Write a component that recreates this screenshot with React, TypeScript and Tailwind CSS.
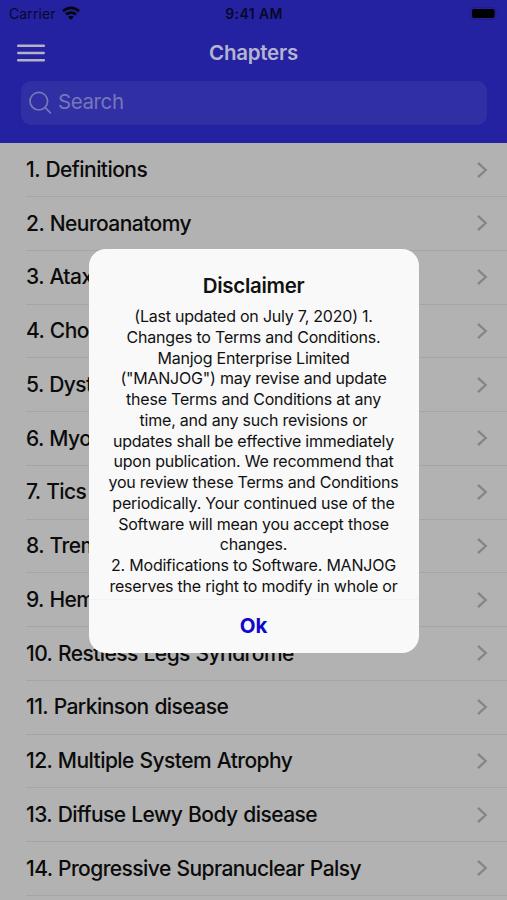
import React, { useState } from 'react'

const chapters = [
  'Definitions',
  'Neuroanatomy',
  'Ataxia',
  'Chorea',
  'Dystonia',
  'Myoclonus',
  'Tics',
  'Tremor',
  'Hemiballism',
  'Restless Legs Syndrome',
  'Parkinson disease',
  'Multiple System Atrophy',
  'Diffuse Lewy Body disease',
  'Progressive Supranuclear Palsy',
]

const disclaimerLines = [
  '(Last updated on July 7, 2020) 1.',
  'Changes to Terms and Conditions.',
  'Manjog Enterprise Limited',
  '("MANJOG") may revise and update',
  'these Terms and Conditions at any',
  'time, and any such revisions or',
  'updates shall be effective immediately',
  'upon publication. We recommend that',
  'you review these Terms and Conditions',
  'periodically. Your continued use of the',
  'Software will mean you accept those',
  'changes.',
  '2. Modifications to Software. MANJOG',
  'reserves the right to modify in whole or',
]

function StatusBar() {
  return (
    <div className="grid h-7 grid-cols-3 items-center pl-[9px] pr-[8px] text-[14px] leading-none text-[#08082b]">
      <div className="flex items-center gap-[6px]">
        <span className="tracking-[0.1px]">Carrier</span>
        <svg width="18" height="14" viewBox="0 0 18 14" fill="none" stroke="#050510" strokeWidth="2.8" className="-mt-[2px]">
          <path d="M1 5.2C5.5 .7 12.5 .7 17 5.2" />
          <path d="M4 8.6c2.8-2.7 7.2-2.7 10 0" />
          <path d="M9 13.8 6.1 10.9c1.6-1.5 4.2-1.5 5.8 0z" fill="#050510" stroke="none" />
        </svg>
      </div>
      <span className="text-center font-semibold tracking-[0.4px] whitespace-nowrap">9:41 AM</span>
      <svg width="29" height="13" viewBox="0 0 29 13" className="-mt-[2px] justify-self-end">
        <rect x="0.5" y="0.5" width="25" height="12" rx="3.5" fill="none" stroke="#1f1d88" />
        <rect x="2" y="2" width="22.5" height="9" rx="2" fill="#000" />
        <path d="M27 4.5c1.6.7 1.6 3.3 0 4z" fill="#1f1d88" />
      </svg>
    </div>
  )
}

function Header() {
  return (
    <header className="h-[142.5px] shrink-0 bg-[#2422a0]">
      <StatusBar />
      <div className="grid h-12 grid-cols-[1fr_auto_1fr] items-center px-[17px]">
        <button aria-label="Menu" className="mt-[2px] flex w-7 flex-col">
          <svg width="28" height="18" viewBox="0 0 28 18" stroke="#b4b3c4" strokeWidth="2.5" strokeLinecap="round">
            <path d="M1.2 1.7h25.6M1.2 8.9h25.6M1.2 16.3h25.6" />
          </svg>
        </button>
        <h1 className="pt-[2px] text-[20.5px] font-semibold tracking-[-0.25px] text-[#b5b4d0]">Chapters</h1>
      </div>
      <div className="mr-[20px] ml-[21px] mt-[4.5px] flex h-11 items-center gap-[6px] rounded-[10px] bg-[#302fa4] pl-[7px] text-[#7776bb]">
        <svg width="24" height="24" viewBox="0 0 24 24" fill="none" stroke="currentColor" strokeWidth="1.7" strokeLinecap="round">
          <circle cx="10.8" cy="10.2" r="8.8" />
          <path d="m17.2 16.6 5.2 5.2" />
        </svg>
        <span className="text-[20.5px] tracking-[-0.4px]">Search</span>
      </div>
    </header>
  )
}

function ChapterRow({ label }: { label: string }) {
  return (
    <li className="ml-[26px] flex h-[53.75px] shrink-0 items-center justify-between border-b border-[#a5a5a6] pr-[19px]">
      <span className="text-[21px] font-medium tracking-[-0.56px] [word-spacing:0.7px] whitespace-nowrap text-[#0b0b0b]">{label}</span>
      <svg width="12" height="18" viewBox="0 0 12 18" fill="none" stroke="#858586" strokeWidth="2.3">
        <path d="m2 1.8 7.7 7.2L2 16.2" />
      </svg>
    </li>
  )
}

function DisclaimerDialog({ onClose }: { onClose: () => void }) {
  return (
    <div className="absolute inset-0 flex justify-center pt-[249px]">
      <div role="dialog" className="flex h-[404px] w-[330px] flex-col overflow-hidden rounded-[17px] bg-[#f9f9f9] text-center text-[#111]">
        <h2 className="pt-[23px] text-[20.5px] leading-[28px] font-semibold tracking-[-0.3px]">Disclaimer</h2>
        <div className="mt-[6px] flex-1 overflow-hidden text-[16px] leading-[20.77px] tracking-[-0.22px] whitespace-nowrap">
          {disclaimerLines.map((line) => (
            <p key={line}>{line}</p>
          ))}
        </div>
        <button onClick={onClose} className="h-[54px] shrink-0 border-t border-[#f3f3f5] text-[20.5px] font-bold text-[#1009c8]">
          Ok
        </button>
      </div>
    </div>
  )
}

export default function App() {
  const [showDisclaimer, setShowDisclaimer] = useState(true)

  return (
    <div className="relative flex h-[900px] w-[507px] flex-col overflow-hidden bg-[#b2b2b2] font-['Inter','Liberation_Sans',sans-serif]">
      <Header />
      <ul className="flex flex-col pt-[0.8px]">
        {chapters.map((name, i) => (
          <ChapterRow key={name} label={`${i + 1}. ${name}`} />
        ))}
      </ul>
      {showDisclaimer && <DisclaimerDialog onClose={() => setShowDisclaimer(false)} />}
    </div>
  )
}
